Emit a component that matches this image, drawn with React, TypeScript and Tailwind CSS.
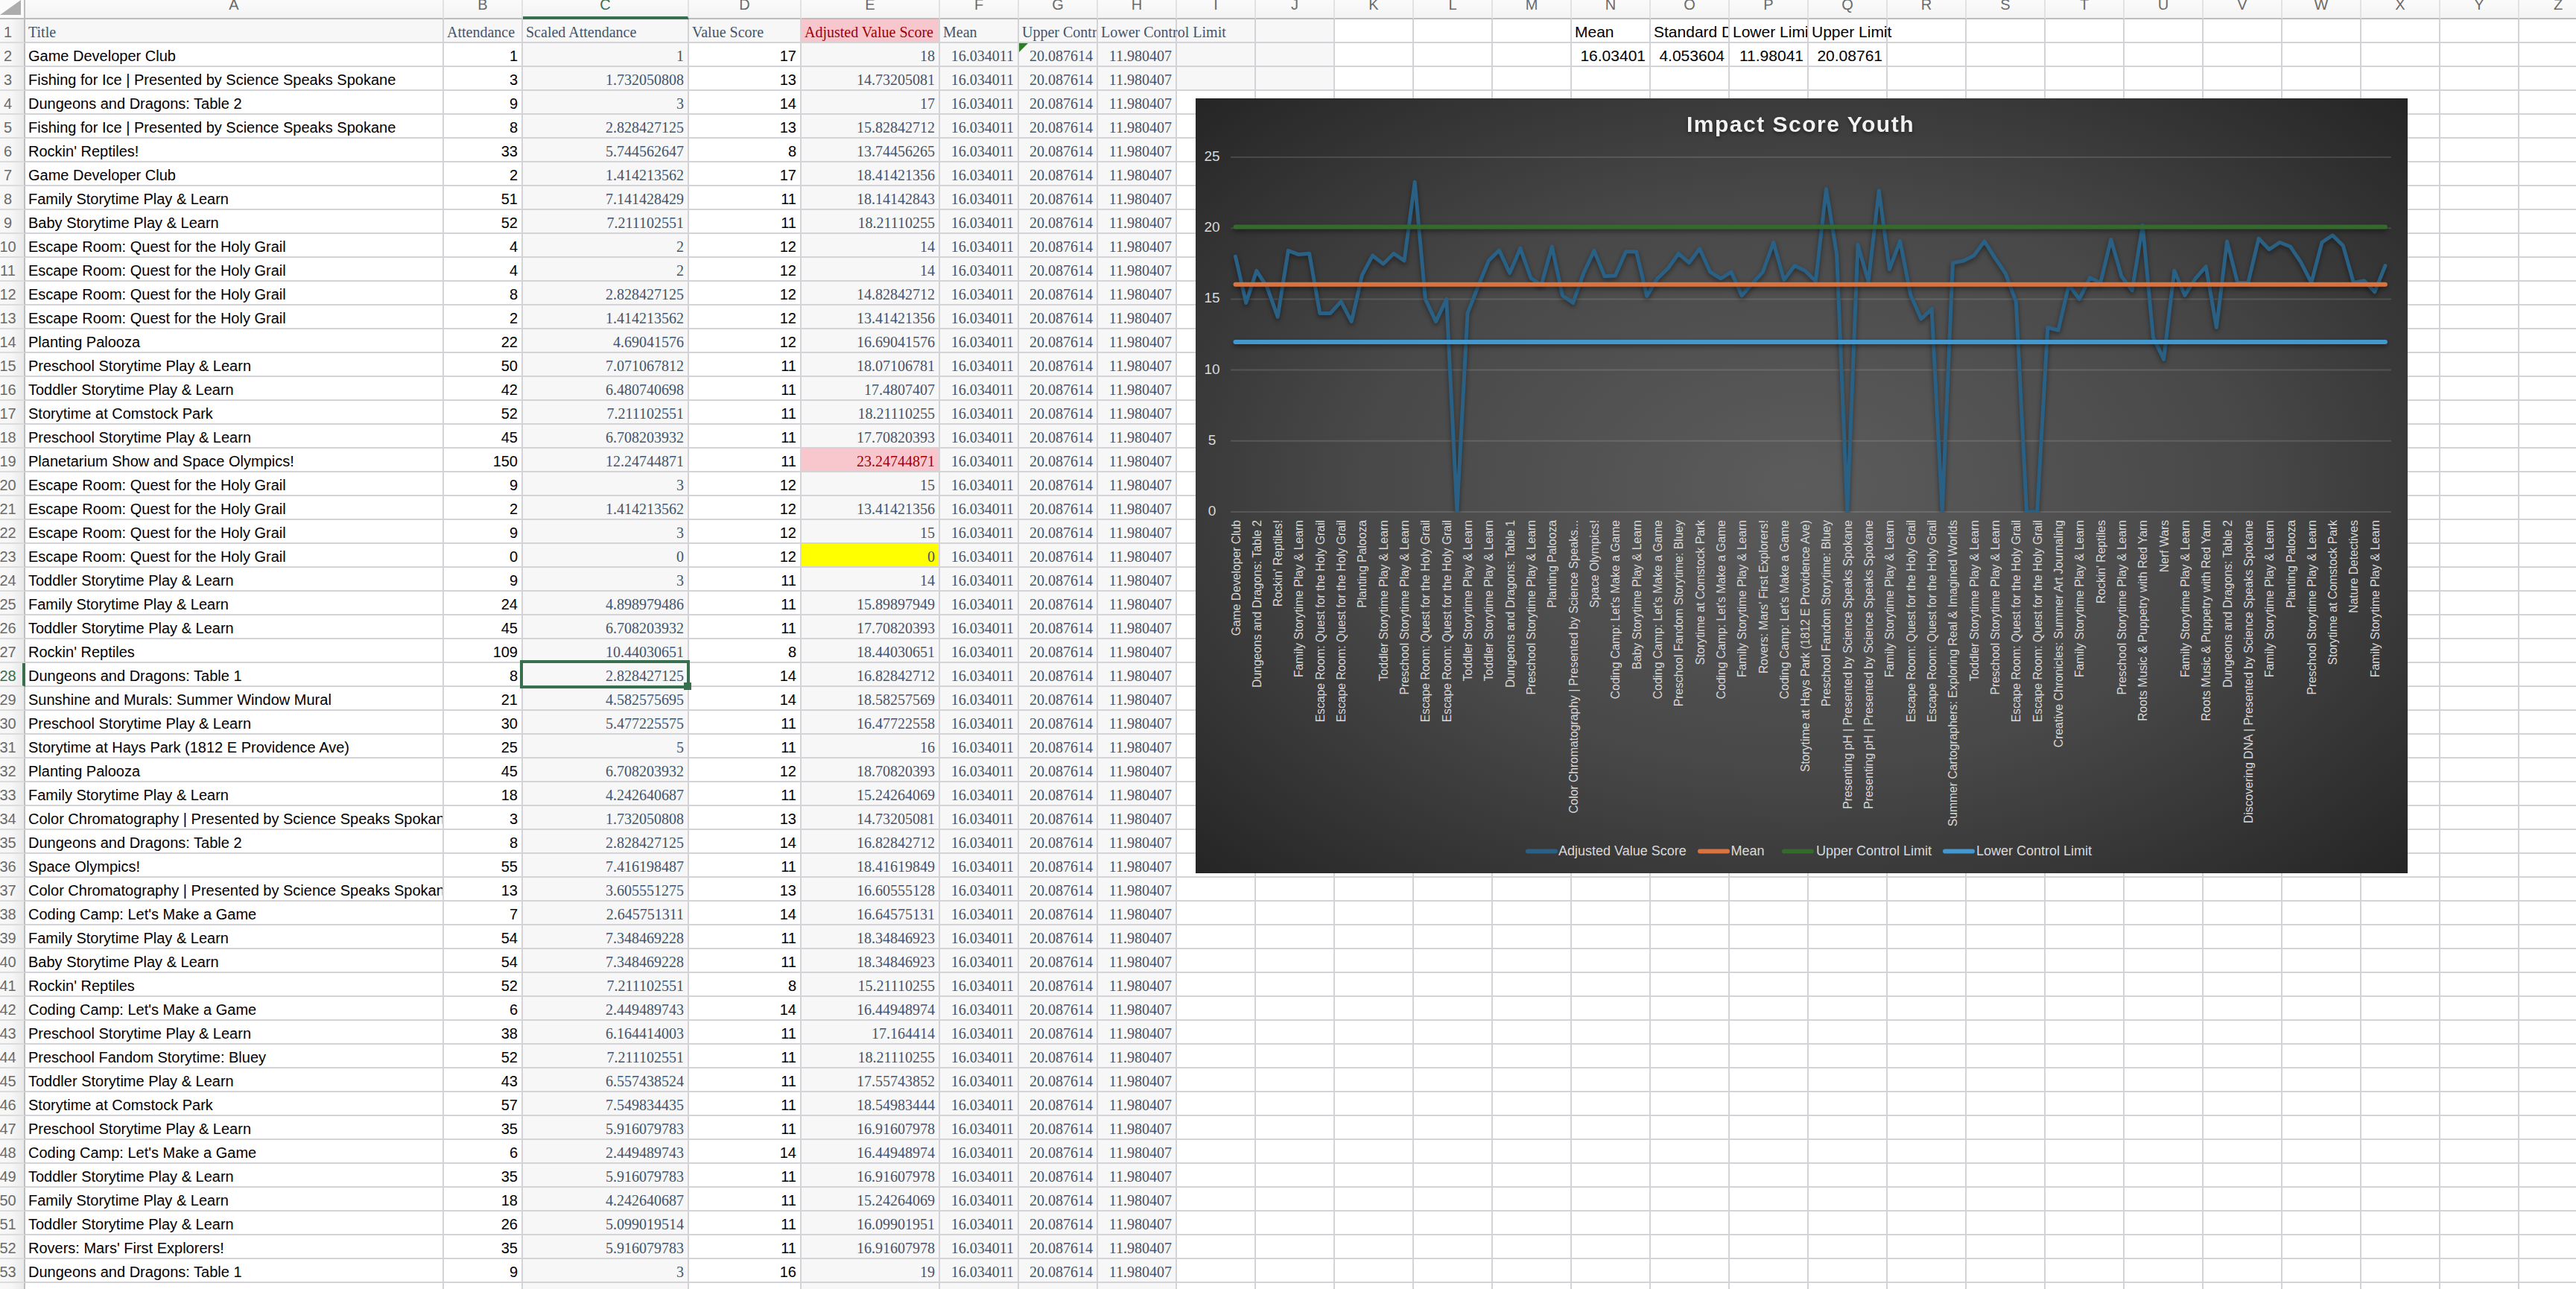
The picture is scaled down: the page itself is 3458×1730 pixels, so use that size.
import React from 'react';
import clsx from 'clsx';

type Row = [string, number, string, number, string];

const GAME = 'Game Developer Club';
const FISH = 'Fishing for Ice | Presented by Science Speaks Spokane';
const DD1 = 'Dungeons and Dragons: Table 1';
const DD2 = 'Dungeons and Dragons: Table 2';
const FAM = 'Family Storytime Play & Learn';
const BABY = 'Baby Storytime Play & Learn';
const ESC = 'Escape Room: Quest for the Holy Grail';
const PRE = 'Preschool Storytime Play & Learn';
const TOD = 'Toddler Storytime Play & Learn';
const PARK = 'Storytime at Comstock Park';
const CODE = "Coding Camp: Let's Make a Game";
const COLOR = 'Color Chromatography | Presented by Science Speaks Spokane';
const PLANT = 'Planting Palooza';
const HAYS = 'Storytime at Hays Park (1812 E Providence Ave)';
const FANDOM = 'Preschool Fandom Storytime: Bluey';
const ROVERS = "Rovers: Mars' First Explorers!";
const PH = 'Presenting pH | Presented by Science Speaks Spokane';
const ROOTS = 'Roots Music & Puppetry with Red Yarn';

const rows: Row[] = [
  [GAME, 1, '1', 17, '18'],
  [FISH, 3, '1.732050808', 13, '14.73205081'],
  [DD2, 9, '3', 14, '17'],
  [FISH, 8, '2.828427125', 13, '15.82842712'],
  ["Rockin' Reptiles!", 33, '5.744562647', 8, '13.74456265'],
  [GAME, 2, '1.414213562', 17, '18.41421356'],
  [FAM, 51, '7.141428429', 11, '18.14142843'],
  [BABY, 52, '7.211102551', 11, '18.21110255'],
  [ESC, 4, '2', 12, '14'],
  [ESC, 4, '2', 12, '14'],
  [ESC, 8, '2.828427125', 12, '14.82842712'],
  [ESC, 2, '1.414213562', 12, '13.41421356'],
  [PLANT, 22, '4.69041576', 12, '16.69041576'],
  [PRE, 50, '7.071067812', 11, '18.07106781'],
  [TOD, 42, '6.480740698', 11, '17.4807407'],
  [PARK, 52, '7.211102551', 11, '18.21110255'],
  [PRE, 45, '6.708203932', 11, '17.70820393'],
  ['Planetarium Show and Space Olympics!', 150, '12.24744871', 11, '23.24744871'],
  [ESC, 9, '3', 12, '15'],
  [ESC, 2, '1.414213562', 12, '13.41421356'],
  [ESC, 9, '3', 12, '15'],
  [ESC, 0, '0', 12, '0'],
  [TOD, 9, '3', 11, '14'],
  [FAM, 24, '4.898979486', 11, '15.89897949'],
  [TOD, 45, '6.708203932', 11, '17.70820393'],
  ["Rockin' Reptiles", 109, '10.44030651', 8, '18.44030651'],
  [DD1, 8, '2.828427125', 14, '16.82842712'],
  ['Sunshine and Murals: Summer Window Mural', 21, '4.582575695', 14, '18.58257569'],
  [PRE, 30, '5.477225575', 11, '16.47722558'],
  [HAYS, 25, '5', 11, '16'],
  [PLANT, 45, '6.708203932', 12, '18.70820393'],
  [FAM, 18, '4.242640687', 11, '15.24264069'],
  [COLOR, 3, '1.732050808', 13, '14.73205081'],
  [DD2, 8, '2.828427125', 14, '16.82842712'],
  ['Space Olympics!', 55, '7.416198487', 11, '18.41619849'],
  [COLOR, 13, '3.605551275', 13, '16.60555128'],
  [CODE, 7, '2.645751311', 14, '16.64575131'],
  [FAM, 54, '7.348469228', 11, '18.34846923'],
  [BABY, 54, '7.348469228', 11, '18.34846923'],
  ["Rockin' Reptiles", 52, '7.211102551', 8, '15.21110255'],
  [CODE, 6, '2.449489743', 14, '16.44948974'],
  [PRE, 38, '6.164414003', 11, '17.164414'],
  [FANDOM, 52, '7.211102551', 11, '18.21110255'],
  [TOD, 43, '6.557438524', 11, '17.55743852'],
  [PARK, 57, '7.549834435', 11, '18.54983444'],
  [PRE, 35, '5.916079783', 11, '16.91607978'],
  [CODE, 6, '2.449489743', 14, '16.44948974'],
  [TOD, 35, '5.916079783', 11, '16.91607978'],
  [FAM, 18, '4.242640687', 11, '15.24264069'],
  [TOD, 26, '5.099019514', 11, '16.09901951'],
  [ROVERS, 35, '5.916079783', 11, '16.91607978'],
  [DD1, 9, '3', 16, '19'],
];

// rows past the visible part of the sheet, read off the chart line
const restOfSeries = [
  16.35, 17.36, 17, 16.25, 22.75, 18.16, 0, 18.83, 16.25, 22.65, 17.1, 19.1, 15.3, 13.6, 14.3, 0, 17.55, 17.7, 18.07,
  19.08, 17.9, 16.8, 14.8, 0, 0, 13, 12.8, 16, 15, 16.5, 16.15, 19.2, 16.6, 15.6, 20.2, 12.3, 10.75, 17, 15.26, 16.44,
  17.3, 13, 19.06, 16.15, 16.15, 19.27, 18.5, 19, 18.7, 17.6, 16.15, 19, 19.5, 18.77, 16.15, 16.3, 15.5, 17.36,
];

const axisLabels = [
  GAME, DD2, "Rockin' Reptiles!", FAM, ESC, ESC, PLANT, TOD, PRE, ESC, ESC, TOD, TOD, DD1, PRE, PLANT,
  'Color Chromatography | Presented by Science Speaks...', 'Space Olympics!', CODE, BABY, CODE, FANDOM, PARK, CODE,
  FAM, ROVERS, CODE, HAYS, FANDOM, PH, PH, FAM, ESC, ESC, 'Summer Cartographers: Exploring Real & Imagined Worlds',
  TOD, PRE, ESC, ESC, 'Creative Chronicles: Summer Art Journaling', FAM, "Rockin' Reptiles", PRE, ROOTS, 'Nerf Wars',
  FAM, ROOTS, DD2, 'Discovering DNA | Presented by Science Speaks Spokane', FAM, PLANT, PRE, PARK, 'Nature Detectives', FAM,
];

const letters = 'ABCDEFGHIJKLMNOPQRSTUVWXYZ'.split('');
const narrow = "'Liberation Sans Narrow','Liberation Sans',sans-serif";

const cellBase = 'flex items-end whitespace-nowrap border-r-2 border-b-2 border-zinc-300 pb-[3px]';

const yOf = (v: number) => 555 - 19.04 * v;
const xOf = (i: number) => 53.5 + 14.16 * i;

const Chart: React.FC = () => {
  const series = [...rows.map((r) => parseFloat(r[4])), ...restOfSeries];
  const points = series.map((v, i) => `${xOf(i)},${yOf(v)}`).join(' ');
  const flat = (v: number) => `M53.5 ${yOf(v)}H${xOf(109)}`;
  return (
    <div className="absolute left-[1605px] top-[132px] z-30 h-[1040px] w-[1627px] bg-[radial-gradient(ellipse_at_center,#5c5c5c_0%,#484848_52%,#252525_100%)]">
      <svg width="1627" height="1040" className="block">
        <defs>
          <clipPath id="plot">
            <rect x="40" y="0" width="1580" height="556" />
          </clipPath>
        </defs>
        <text
          x="812"
          y="45"
          textAnchor="middle"
          fill="#f2f2f2"
          fontSize="30"
          fontWeight="700"
          letterSpacing="1.5"
          style={{ fontFamily: narrow }}
          className="drop-shadow-[0_2px_2px_rgba(0,0,0,0.5)]"
        >
          Impact Score Youth
        </text>

        {[25, 20, 15, 10, 5, 0].map((v) => (
          <g key={v}>
            <path d={`M47 ${yOf(v)}H1605`} stroke="#ffffff" strokeOpacity="0.13" strokeWidth="2" />
            <text x="22" y={yOf(v) + 5} textAnchor="middle" fill="#d9d9d9" fontSize="19" style={{ fontFamily: narrow }}>
              {v}
            </text>
          </g>
        ))}

        <g clipPath="url(#plot)">
          <polyline
            points={points}
            fill="none"
            stroke="#2a6083"
            strokeWidth="5"
            strokeLinejoin="round"
            strokeLinecap="round"
            className="drop-shadow-[0_3px_3px_rgba(0,0,0,0.45)]"
          />
        </g>
        <path d={flat(16.034)} stroke="#d9733f" strokeWidth="6" strokeLinecap="round" className="drop-shadow-[0_3px_3px_rgba(0,0,0,0.45)]" />
        <path d={flat(20.0876)} stroke="#35692d" strokeWidth="6" strokeLinecap="round" className="drop-shadow-[0_3px_3px_rgba(0,0,0,0.45)]" />
        <path d={flat(11.98)} stroke="#4399cf" strokeWidth="6" strokeLinecap="round" className="drop-shadow-[0_3px_3px_rgba(0,0,0,0.45)]" />

        {axisLabels.map((label, i) => (
          <text
            key={i}
            transform={`translate(${xOf(i * 2) + 6} 566) rotate(-90)`}
            textAnchor="end"
            fill="#d9d9d9"
            fontSize="15.7"
            style={{ fontFamily: "'Liberation Sans',sans-serif" }}
          >
            {label}
          </text>
        ))}

        {[
          { x: 446, c: '#2a6083', t: 'Adjusted Value Score', tx: 487 },
          { x: 677, c: '#d9733f', t: 'Mean', tx: 718.6 },
          { x: 790, c: '#35692d', t: 'Upper Control Limit', tx: 833 },
          { x: 1006, c: '#4399cf', t: 'Lower Control Limit', tx: 1048 },
        ].map((s) => (
          <g key={s.t}>
            <path d={`M${s.x} 1010.5h37`} stroke={s.c} strokeWidth="6" strokeLinecap="round" />
            <text x={s.tx} y="1016" fill="#d9d9d9" fontSize="18" style={{ fontFamily: narrow }}>
              {s.t}
            </text>
          </g>
        ))}
      </svg>
    </div>
  );
};

function ColHead({ letter }: { letter: string }) {
  const active = letter === 'C';
  return (
    <div
      className={clsx(
        'flex justify-center overflow-hidden border-r-2 border-r-[#e2e2e2] bg-linear-to-b from-[#fbfbfb] to-[#f3f3f3] leading-[20px]',
        active ? 'border-b-4 border-b-[#38704f] text-[#38704f]' : 'border-b-2 border-b-[#bdbdbd] text-[#6a6a6a]',
      )}
    >
      <span className="-mt-[4px]">{letter}</span>
    </div>
  );
}

function RowHead({ n }: { n: number }) {
  const active = n === 28;
  return (
    <div
      className={clsx(
        'flex items-end justify-center border-b-2 border-b-[#dcdcdc] bg-linear-to-r from-[#f8f8f8] via-[#f6f6f6] to-[#e9e9e9] pb-[3px]',
        active ? 'border-r-4 border-r-[#38704f] pr-[9px] text-[#38704f]' : 'border-r-2 border-r-[#bdbdbd] pr-[11px] text-[#6a6a6a]',
      )}
    >
      {n < 54 ? n : ''}
    </div>
  );
}

const gray = 'bg-[#f7f7f8]';
const slate = "text-[#44546a] font-['Liberation_Serif',serif]";

function Head({ text, spill, className }: { text?: string; spill?: boolean; className?: string }) {
  return (
    <div className={clsx(cellBase, 'pl-[4px]', spill ? 'relative z-10' : 'overflow-hidden', className)}>{text}</div>
  );
}

function Num({ children, className }: { children?: React.ReactNode; className?: string }) {
  return <div className={clsx(cellBase, 'justify-end overflow-hidden pr-[5px]', className)}>{children}</div>;
}

function emptyTail(n: number) {
  const cells: React.ReactNode[] = [];
  // K..Z on plain rows, I and J stay grey for the first three rows
  for (let c = 8; c < 26; c++) {
    const greyed = c < 10 && n <= 3;
    cells.push(<div key={c} className={clsx('border-r-2 border-b-2 border-zinc-300', greyed ? gray : 'bg-white')} />);
  }
  return cells;
}

export default function App() {
  return (
    <div className="relative h-[1730px] w-[3458px] overflow-hidden bg-white font-['Liberation_Sans',Arial,sans-serif] text-[20px] leading-[20px] text-black">
      <div className="grid w-max grid-cols-[34px_562px_106px_223px_151px_186px_repeat(21,106px)] grid-rows-[26px_repeat(54,32px)]">
        {/* column letters */}
        <div className="relative border-r-2 border-b-2 border-r-[#bdbdbd] border-b-[#bdbdbd] bg-[#fbfbfb]">
          <svg width="28" height="20" className="absolute left-0 top-0">
            <path d="M28 0V20H0Z" fill="#adadad" />
          </svg>
        </div>
        {letters.map((l) => (
          <ColHead key={l} letter={l} />
        ))}

        {/* row 1 */}
        <RowHead n={1} />
        <Head text="Title" className={clsx(gray, slate)} />
        <Head text="Attendance" className={clsx(gray, slate)} />
        <Head text="Scaled Attendance" className={clsx(gray, slate)} />
        <Head text="Value Score" className={clsx(gray, slate)} />
        <Head text="Adjusted Value Score" className="bg-[#f8c7ce] font-['Liberation_Serif',serif] text-[#9c0006]" />
        <Head text="Mean" className={clsx(gray, slate)} />
        <Head text="Upper Control Limit" className={clsx(gray, slate)} />
        <Head text="Lower Control Limit" spill className={clsx(gray, slate)} />
        <Head className={gray} />
        <Head className={gray} />
        <Head />
        <Head />
        <Head />
        <Head text="Mean" className="text-[21px]" />
        <Head text="Standard Deviation" className="text-[21px]" />
        <Head text="Lower Limit" className="text-[21px]" />
        <Head text="Upper Limit" spill className="text-[21px]" />
        {letters.slice(17).map((l) => (
          <Head key={l} />
        ))}

        {/* data rows */}
        {rows.map((r, i) => {
          const n = i + 2;
          return (
            <React.Fragment key={n}>
              <RowHead n={n} />
              <div className={clsx(cellBase, 'overflow-hidden pl-[4px]')}>{r[0]}</div>
              <Num>{r[1]}</Num>
              {n === 28 ? (
                <div className={clsx(cellBase, gray, slate, 'relative z-20 justify-end pr-[5px]')}>
                  {r[2]}
                  <span className="absolute -left-[4px] -top-[4px] h-[38px] w-[228px] border-4 border-[#38704f]" />
                  <span className="absolute left-[216px] top-[26px] h-[10px] w-[10px] bg-[#38704f]" />
                </div>
              ) : (
                <Num className={clsx(gray, slate)}>{r[2]}</Num>
              )}
              <Num>{r[3]}</Num>
              <Num
                className={clsx(
                  "font-['Liberation_Serif',serif]",
                  n === 19
                    ? 'bg-[#f8c7ce] text-[#9c0006]'
                    : n === 23
                      ? 'bg-[#ffff00] text-[#44546a]'
                      : 'bg-[#f7f7f8] text-[#44546a]',
                )}
              >
                {r[4]}
              </Num>
              <Num className={clsx(gray, slate)}>16.034011</Num>
              <Num className={clsx(gray, slate, n === 2 && 'relative')}>
                {n === 2 && (
                  <svg width="12" height="12" className="absolute left-0 top-0">
                    <path d="M0 0H12L0 12Z" fill="#2f7d2b" />
                  </svg>
                )}
                20.087614
              </Num>
              <Num className={clsx(gray, slate)}>11.980407</Num>
              {n === 2 ? (
                <>
                  {emptyTail(n).slice(0, 5)}
                  <Num className="text-[21px]">16.03401</Num>
                  <Num className="text-[21px]">4.053604</Num>
                  <Num className="text-[21px]">11.98041</Num>
                  <Num className="text-[21px]">20.08761</Num>
                  {emptyTail(n).slice(9)}
                </>
              ) : (
                emptyTail(n)
              )}
            </React.Fragment>
          );
        })}

        {/* row 54, just the top of it shows */}
        <RowHead n={54} />
        <Head />
        <Head />
        <Head className={gray} />
        <Head />
        <Head className={gray} />
        <Head className={gray} />
        <Head className={gray} />
        <Head className={gray} />
        {emptyTail(54)}
      </div>
      <Chart />
    </div>
  );
}
